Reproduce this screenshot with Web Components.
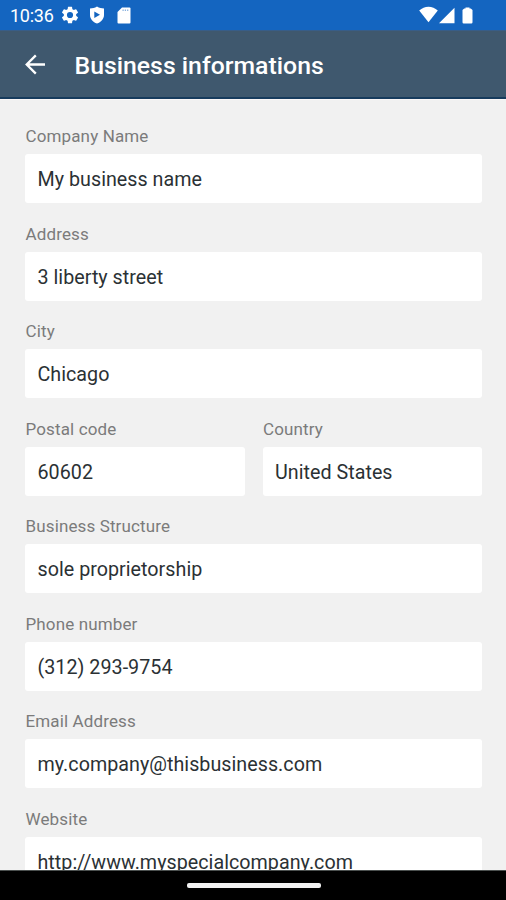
<!DOCTYPE html>
<html lang="en">
<head>
<meta charset="utf-8">
<title>Business informations</title>
<style>
html,body{margin:0;height:100%;overflow:hidden;background:#f1f1f1}
body{font-family:Roboto,"Liberation Sans",sans-serif}
</style>
</head>
<body>
<app-screen>
  <status-bar slot="top" time="10:36"></status-bar>
  <app-bar slot="top">Business informations</app-bar>
  <form-field label="Company Name">My business name</form-field>
  <form-field label="Address">3 liberty street</form-field>
  <form-field label="City">Chicago</form-field>
  <field-row>
    <form-field label="Postal code">60602</form-field>
    <form-field label="Country">United States</form-field>
  </field-row>
  <form-field label="Business Structure">sole proprietorship</form-field>
  <form-field label="Phone number">(312) 293-9754</form-field>
  <form-field label="Email Address">my.company@thisbusiness.com</form-field>
  <form-field label="Website">http://www.myspecialcompany.com</form-field>
  <nav-bar slot="bottom"></nav-bar>
</app-screen>
<script>
const define = (name, html, setup) => customElements.define(name, class extends HTMLElement {
  constructor() {
    super();
    this.attachShadow({mode: 'open'}).innerHTML = html;
  }
  connectedCallback() { if (setup) setup(this, this.shadowRoot); }
});

define('app-screen', `<style>
:host{display:flex;flex-direction:column;width:506px;height:900px;background:#f1f1f1;overflow:hidden}
main{flex:1;min-height:0;overflow:hidden;box-sizing:border-box;padding:24px 24px 0 25px;border-top:1px solid #fbf7f7;display:flex;flex-direction:column}
</style><slot name="top"></slot><main><slot></slot></main><slot name="bottom"></slot>`);

define('status-bar', `<style>
:host{display:flex;flex:none;align-items:center;height:30px;box-sizing:border-box;padding:1px 32px 0 10px;background:#1465c0;color:#fff}
span{font-size:18px;line-height:30px;width:52px;white-space:nowrap;letter-spacing:-.25px}
svg{display:block;fill:#fff;flex:none}
.gear{margin-left:-1px;margin-top:-1px}.shield{margin-left:10px;margin-top:-1px}.card{margin-left:12px;margin-top:-1px}
.wifi{margin-left:auto;margin-top:-2px}.cell{margin-left:1px;margin-top:-1px}.battery{margin-left:7px;margin-right:1px;margin-top:-1px}
</style>
<span></span>
<svg class="gear" width="18" height="18" viewBox="1.500 1.500 21 21"><path d="M19.14 12.94c.04-.3.06-.61.06-.94s-.02-.64-.07-.94l2.03-1.58a.5.5 0 0 0 .12-.61l-1.92-3.32a.49.49 0 0 0-.59-.22l-2.39.96a7 7 0 0 0-1.62-.94l-.36-2.54A.48.48 0 0 0 13.92 2.4h-3.84a.47.47 0 0 0-.47.41l-.36 2.54c-.59.24-1.13.57-1.62.94l-2.39-.96a.48.48 0 0 0-.59.22L2.74 8.87a.48.48 0 0 0 .12.61l2.03 1.58a6 6 0 0 0-.02 1.88l-2.03 1.58a.5.5 0 0 0-.12.61l1.92 3.32c.12.22.37.29.59.22l2.39-.96c.5.38 1.03.7 1.62.94l.36 2.54c.05.24.24.41.48.41h3.84c.24 0 .44-.17.47-.41l.36-2.54a7 7 0 0 0 1.62-.94l2.39.96c.22.08.47 0 .59-.22l1.92-3.32a.48.48 0 0 0-.12-.61zM12 15.600a3.600 3.600 0 1 1 0-7.200 3.600 3.600 0 0 1 0 7.200z"/></svg>
<svg class="shield" width="16" height="18" viewBox="0 0 16 18"><path fill-rule="evenodd" d="M8 .5C5.700 1.900 3.500 2.400 1 2.500V9c0 4 3 7 7 8.600 4-1.600 7-4.600 7-8.600V2.500C12.500 2.400 10.300 1.900 8 .5zM5.300 5.400v6.600L11 8.700z"/></svg>
<svg class="card" width="14" height="17" viewBox="0 0 14 17"><path fill-rule="evenodd" d="M5 .5h7.500Q13.500.5 13.500 1.500v14q0 1-1 1h-11q-1 0-1-1V5z"/><path d="M5.500 3.200h6.500" stroke="#1465c0" stroke-width="1.600" stroke-dasharray="1.200 1.100" opacity=".5"/></svg>
<svg class="wifi" width="19" height="17" viewBox="0 0 19 17"><path d="M.2 4.500Q4.300.7 9.500.7t9.300 3.800L9.500 16.200z"/></svg>
<svg class="cell" width="16" height="17" viewBox="0 0 16 17"><path d="M15.500.8v15.500H0z"/></svg>
<svg class="battery" width="11" height="17" viewBox="0 0 11 17"><path d="M3.500.4h4v1h1.300L10.500 3v12.200q0 1.200-1.200 1.200H1.700Q.5 16.400.5 15.200V3L2.200 1.400h1.300z"/></svg>`,
(el, root) => { root.querySelector('span').textContent = el.getAttribute('time'); });

define('app-bar', `<style>
:host{display:flex;flex:none;align-items:center;height:69px;box-sizing:border-box;padding-left:25px;background:#3f586e;border-top:1px solid #385d87;border-bottom:2px solid #173b5d;color:#fff;font-size:24.800px;font-weight:500;line-height:32px;white-space:nowrap}
svg{display:block;margin:1px 28.500px 0 0}
h1{margin:4px 0 0;font:inherit}
</style><svg width="21" height="21" viewBox="0 0 21 21" fill="none" stroke="#fff" stroke-width="2.300"><path d="M20 10.500H2M10.800 1.400l-9.100 9.100 9.100 9.100"/></svg><h1><slot></slot></h1>`);

define('field-row', `<style>
:host{display:grid;flex:none;grid-template-columns:1fr 1fr;gap:18px}
</style><slot></slot>`);

define('form-field', `<style>
:host{display:flex;flex:none;flex-direction:column;height:97.5px;min-width:0}
label{height:30px;line-height:25px;font-size:17px;letter-spacing:.13px;padding-left:.5px;color:#7b7b7b;white-space:nowrap}
div{height:49px;box-sizing:border-box;padding:1px 12.5px 0;border-radius:3px;background:#fff;color:#2b3134;font-size:19.700px;letter-spacing:.03px;line-height:49px;white-space:nowrap}
</style><label></label><div><slot></slot></div>`,
(el, root) => { root.querySelector('label').textContent = el.getAttribute('label'); });

define('nav-bar', `<style>
:host{display:flex;flex:none;height:30px;box-sizing:border-box;border-top:1px solid #4b504f;background:#000;justify-content:center;padding:12px 0 0 1px}
i{display:block;width:134px;height:5px;border-radius:2px;background:#f2f2f2}
</style><i></i>`);
</script>
</body>
</html>
